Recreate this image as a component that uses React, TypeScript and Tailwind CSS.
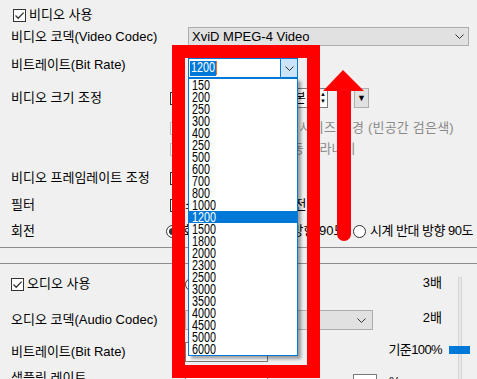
import React from 'react'

const rates = ['150', '200', '250', '300', '400', '250', '500', '600', '700', '800', '1000', '1200', '1500', '1800', '2000', '2300', '2500', '3000', '3500', '4000', '4500', '5000', '6000']

function CheckBox({ checked = false, disabled = false }: { checked?: boolean; disabled?: boolean }) {
  return (
    <span className={`flex h-[13px] w-[13px] shrink-0 items-center justify-center border bg-white ${disabled ? 'border-[#bcbcbc]' : 'border-[#333333]'}`}>
      {checked && (
        <svg width="11" height="11" viewBox="0 0 11 11">
          <path d="M1.5 5.5 L4.2 8.2 L9.6 2.6" fill="none" stroke="#333" strokeWidth="1.3" />
        </svg>
      )}
    </span>
  )
}

function Radio({ checked = false }: { checked?: boolean }) {
  return (
    <span className="flex h-[13px] w-[13px] shrink-0 items-center justify-center rounded-full border border-[#333333] bg-white">
      {checked && <span className="h-[7px] w-[7px] rounded-full bg-[#333333]" />}
    </span>
  )
}

function Chevron() {
  return (
    <svg width="9" height="5" viewBox="0 0 9 5">
      <path d="M0.5 0.5 L4.5 4.5 L8.5 0.5" fill="none" stroke="#333" strokeWidth="1" />
    </svg>
  )
}

function Digits({ children }: { children: React.ReactNode }) {
  return <span className="inline-block origin-left scale-x-[0.77] font-['Liberation_Sans',sans-serif] text-[14px] leading-[12px]">{children}</span>
}

export default function App() {
  return (
    <div className="relative h-[379px] w-[477px] overflow-hidden bg-[#f0f0f0] font-['Liberation_Sans','Noto_Sans_CJK_KR',sans-serif] text-[13px] leading-5 text-black">
      {/* 비디오 */}
      <div className="flex flex-col pl-[11px] pt-[5px]">
        <div className="flex h-[22px] items-start">
          <div className="flex h-5 items-center gap-[3px] pl-[2px]">
            <CheckBox checked />
            <span>비디오 사용</span>
          </div>
        </div>

        <div className="flex h-[28px] items-start">
          <span className="h-5 w-[177px] whitespace-nowrap">비디오 코덱(Video Codec)</span>
          <div className="flex h-[19px] w-[281px] items-center justify-between border border-[#adadad] bg-[#e1e1e1] pl-[3px] pr-[4px] leading-[17px]">
            <span>XviD MPEG-4 Video</span>
            <Chevron />
          </div>
        </div>

        <div className="flex h-[33px] items-start">
          <span className="h-5 w-[177px]">비트레이트(Bit Rate)</span>
        </div>

        <div className="flex h-[30px] items-start">
          <span className="h-5 w-[159px]">비디오 크기 조정</span>
          <div className="flex h-5 items-center">
            <CheckBox />
            <div className="ml-[77px] flex h-5 w-[68px] items-center border border-[#7a7a7a] bg-white">
              <span className="pl-[21px]">원본</span>
              <span className="ml-auto flex h-full w-[9px] flex-col items-center justify-center border-l border-[#adadad] text-[6px] leading-[7px]">
                <span>▲</span>
                <span>▼</span>
              </span>
            </div>
            <div className="ml-[26px] flex h-5 w-[15px] items-center justify-center border border-[#adadad] bg-[#e1e1e1] text-[9px] leading-none">▼</div>
          </div>
        </div>

        <div className="flex h-[21px] items-start">
          <span className="h-5 w-[159px]" />
          <div className="flex h-5 items-center text-[#8a8a8a]">
            <CheckBox disabled />
            <span className="ml-[36px] whitespace-nowrap tracking-[0.2px]">비율 유지하며 사이즈 변경 (빈공간 검은색)</span>
          </div>
        </div>

        <div className="flex h-[29px] items-start">
          <span className="h-5 w-[159px]" />
          <div className="flex h-5 items-center text-[#8a8a8a]">
            <CheckBox disabled />
            <span className="ml-[42px] whitespace-nowrap">여백 없이 자동 잘라내기</span>
          </div>
        </div>

        <div className="flex h-[27px] items-start">
          <span className="h-5 w-[159px] whitespace-nowrap">비디오 프레임레이트 조정</span>
          <div className="flex h-5 items-center gap-[4px]">
            <CheckBox />
            <span>변경</span>
          </div>
        </div>

        <div className="flex h-[26px] items-start">
          <span className="h-5 w-[159px]">필터</span>
          <div className="flex h-5 items-center">
            <CheckBox />
            <span className="ml-[2px] w-[70px]">소프트</span>
            <span className="whitespace-nowrap">좌우 반전</span>
          </div>
        </div>

        <div className="flex h-[20px] items-start">
          <span className="h-5 w-[155px]">회전</span>
          <div className="flex h-5 items-center">
            <Radio checked />
            <span className="ml-[4px] w-[65px] whitespace-nowrap">회전 없음</span>
            <Radio />
            <span className="ml-[3px] w-[89px] whitespace-nowrap">시계 방향 90도</span>
            <Radio />
            <span className="ml-[4px] whitespace-nowrap tracking-[-0.5px]">시계 반대 방향 90도</span>
          </div>
        </div>
      </div>

      <div className="mt-[6px] border-t border-[#8c8c8c]" />
      <div className="mt-[15px] border-t border-[#8c8c8c]" />

      {/* 오디오 */}
      <div className="flex">
        <div className="flex w-[390px] shrink-0 flex-col pl-[11px] pt-[10px]">
          <div className="flex h-[36px] items-start">
            <div className="flex h-5 w-[174px] items-center gap-[3px]">
              <CheckBox checked />
              <span>오디오 사용</span>
            </div>
            <div className="flex h-5 items-center gap-[4px]">
              <Radio />
              <span>기본</span>
            </div>
          </div>

          <div className="flex h-[32px] items-start">
            <span className="h-5 w-[174px] whitespace-nowrap">오디오 코덱(Audio Codec)</span>
            <div className="flex h-[20px] w-[188px] items-center justify-end border border-[#adadad] bg-[#e1e1e1] pr-[6px]">
              <Chevron />
            </div>
          </div>

          <div className="flex h-[26px] items-start">
            <span className="h-5 w-[174px]">비트레이트(Bit Rate)</span>
            <div className="h-[20px] w-[83px] border border-[#7a7a7a] bg-white" />
          </div>

          <div className="flex items-start">
            <span className="h-5 w-[174px] shrink-0 whitespace-nowrap">샘플링 레이트</span>
            <div className="mt-[8px] h-[20px] w-[83px] shrink-0 border border-[#7a7a7a] bg-white" />
            <div className="ml-[85px] mt-[6px] flex h-[18px] w-[24px] shrink-0 items-center justify-end border border-[#7a7a7a] bg-white pr-[2px] text-[11px]">100</div>
            <span className="ml-[12px] mt-[4px] shrink-0">%</span>
          </div>
        </div>

        <div className="flex">
          <div className="flex w-[52px] flex-col items-end pt-[9px]">
            <span className="h-5">3배</span>
            <span className="mt-[15px] h-5">2배</span>
            <span className="mt-[12px] h-5 whitespace-nowrap tracking-[-0.6px]">기준100%</span>
          </div>
          <div className="relative ml-[7px] w-[22px]">
            <div className="absolute left-[9px] top-[13px] h-[200px] w-[4px] border border-[#d6d6d6] bg-[#e7e7e7]" />
            <div className="absolute left-0 top-[82px] h-[8px] w-[21px] bg-[#0078d7]" />
          </div>
        </div>
      </div>

      {/* 펼쳐진 비트레이트 콤보박스 */}
      <div className="absolute left-[188px] top-[58px] flex h-[20px] w-[110px] items-center border border-[#0078d7] bg-white">
        <span className="ml-[1px] flex h-[15px] items-center bg-[#0078d7] px-[1px] text-white">
          <span className="w-[24px] overflow-visible">
            <Digits>1200</Digits>
          </span>
        </span>
        <span className="h-[14px] w-[1px] bg-[#e8742d]" />
        <span className="ml-auto flex h-full w-[17px] items-center justify-center border-l border-[#0078d7] bg-[#cce4f7]">
          <Chevron />
        </span>
      </div>
      <div className="absolute left-[188px] top-[78px] w-[110px] border border-[#0078d7] bg-white shadow-[3px_3px_3px_rgba(0,0,0,0.35)]">
        {rates.map((r, i) => (
          <div key={i} className={`flex h-[12px] items-center pl-[3px] ${i === 11 ? 'bg-[#0078d7] text-white' : ''}`}>
            <Digits>{r}</Digits>
          </div>
        ))}
      </div>

      {/* 빨간 표시 */}
      <div className="absolute left-[172px] top-[45px] h-[333px] w-[148px] border-[13px] border-[#ff0000]" />
      <svg className="absolute left-[320px] top-[66px]" width="48" height="182" viewBox="0 0 48 182">
        <line x1="24" y1="20" x2="24" y2="168" stroke="#ff0000" strokeWidth="14" strokeLinecap="round" />
        <polygon points="3,25 23,4 44,25" fill="#ff0000" />
      </svg>
    </div>
  )
}
